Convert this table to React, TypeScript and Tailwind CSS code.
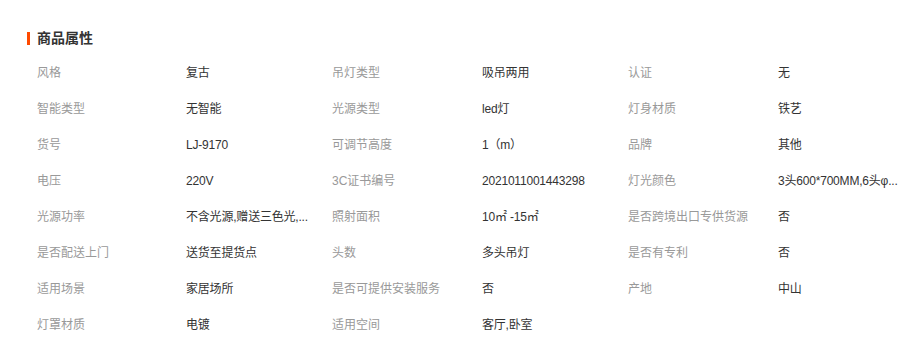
const attrs: [string, string][] = [
  ['风格', '复古'],
  ['吊灯类型', '吸吊两用'],
  ['认证', '无'],
  ['智能类型', '无智能'],
  ['光源类型', 'led灯'],
  ['灯身材质', '铁艺'],
  ['货号', 'LJ-9170'],
  ['可调节高度', '1（m）'],
  ['品牌', '其他'],
  ['电压', '220V'],
  ['3C证书编号', '2021011001443298'],
  ['灯光颜色', '3头600*700MM,6头φ...'],
  ['光源功率', '不含光源,赠送三色光,...'],
  ['照射面积', '10㎡ -15㎡'],
  ['是否跨境出口专供货源', '否'],
  ['是否配送上门', '送货至提货点'],
  ['头数', '多头吊灯'],
  ['是否有专利', '否'],
  ['适用场景', '家居场所'],
  ['是否可提供安装服务', '否'],
  ['产地', '中山'],
  ['灯罩材质', '电镀'],
  ['适用空间', '客厅,卧室'],
];

export default function App() {
  return (
    <div
      className="w-[914px] h-[359px] bg-white pl-[27px] pt-[31px]"
      style={{ fontFamily: '"Liberation Sans", "Noto Sans CJK SC", sans-serif' }}
    >
      <div className="flex items-center h-[14px]">
        <span className="w-[3px] h-[13px] bg-[#ff4a00]" />
        <span className="ml-[7px] text-[14px] font-bold text-[#333] leading-[14px]">商品属性</span>
      </div>

      <div className="mt-[10px] ml-[10px] grid grid-cols-[149px_146px_150px_146px_150px_130px] text-[12px]">
        {attrs.map(([label, value]) => (
          <div key={label} className="contents">
            <div className="h-[36px] flex items-center text-[#999] whitespace-nowrap">{label}</div>
            <div className="h-[36px] flex items-center text-[#333] whitespace-nowrap tracking-[-0.2px]">{value}</div>
          </div>
        ))}
      </div>
    </div>
  );
}
